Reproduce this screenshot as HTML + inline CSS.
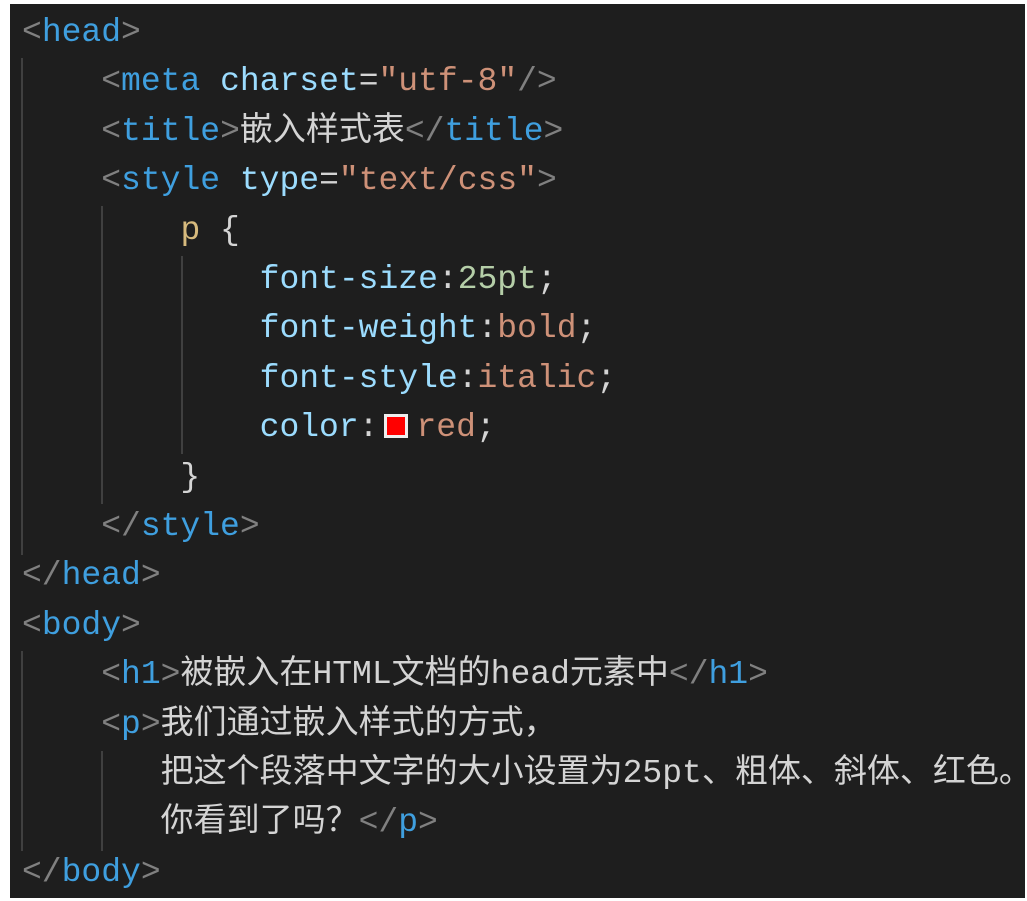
<!DOCTYPE html>
<html><head><meta charset="utf-8"><style>
html,body{margin:0;padding:0;background:#fff;width:1027px;height:901px;overflow:hidden}
#ed{position:absolute;left:10px;top:4px;width:1015px;height:894px;background:#1e1e1e}
.l{position:absolute;left:22px;height:49.4px;line-height:49.4px;font-family:"Liberation Mono","Noto Sans CJK SC",monospace;font-size:33px;white-space:pre;color:#d4d4d4}
.b{color:#808080}.t{color:#3f9fdf}.a{color:#9cdcfe}.s{color:#ce9178}.y{color:#d7ba7d}.n{color:#b5cea8}
.g{position:absolute;width:2px;background:#404040}
.sw{display:inline-block;width:18px;height:18px;background:#f00;border:3px solid #eee;vertical-align:-2px;margin:0 8px 0 6px}
#w{position:absolute;left:0;top:3px;width:1027px;height:898px}
</style></head><body>
<div id="ed"></div>
<div id="w">
<div class="g" style="left:21px;top:55px;height:497px"></div>
<div class="g" style="left:21px;top:648px;height:200px"></div>
<div class="g" style="left:101px;top:203px;height:298px"></div>
<div class="g" style="left:101px;top:748px;height:100px"></div>
<div class="g" style="left:181px;top:253px;height:198px"></div>
<div class="l" style="top:5px"><span class="b">&lt;</span><span class="t">head</span><span class="b">&gt;</span></div>
<div class="l" style="top:54.4px">    <span class="b">&lt;</span><span class="t">meta</span> <span class="a">charset</span>=<span class="s">"utf-8"</span><span class="b">/&gt;</span></div>
<div class="l" style="top:103.8px">    <span class="b">&lt;</span><span class="t">title</span><span class="b">&gt;</span>嵌入样式表<span class="b">&lt;/</span><span class="t">title</span><span class="b">&gt;</span></div>
<div class="l" style="top:153.2px">    <span class="b">&lt;</span><span class="t">style</span> <span class="a">type</span>=<span class="s">"text/css"</span><span class="b">&gt;</span></div>
<div class="l" style="top:202.6px">        <span class="y">p</span> {</div>
<div class="l" style="top:252px">            <span class="a">font-size</span>:<span class="n">25pt</span>;</div>
<div class="l" style="top:301.4px">            <span class="a">font-weight</span>:<span class="s">bold</span>;</div>
<div class="l" style="top:350.8px">            <span class="a">font-style</span>:<span class="s">italic</span>;</div>
<div class="l" style="top:400.2px">            <span class="a">color</span>:<span class="sw"></span><span class="s">red</span>;</div>
<div class="l" style="top:449.6px">        }</div>
<div class="l" style="top:499px">    <span class="b">&lt;/</span><span class="t">style</span><span class="b">&gt;</span></div>
<div class="l" style="top:548.4px"><span class="b">&lt;/</span><span class="t">head</span><span class="b">&gt;</span></div>
<div class="l" style="top:597.8px"><span class="b">&lt;</span><span class="t">body</span><span class="b">&gt;</span></div>
<div class="l" style="top:647.2px">    <span class="b">&lt;</span><span class="t">h1</span><span class="b">&gt;</span>被嵌入在HTML文档的head元素中<span class="b">&lt;/</span><span class="t">h1</span><span class="b">&gt;</span></div>
<div class="l" style="top:696.6px">    <span class="b">&lt;</span><span class="t">p</span><span class="b">&gt;</span>我们通过嵌入样式的方式，</div>
<div class="l" style="top:746px">       把这个段落中文字的大小设置为25pt、粗体、斜体、红色。</div>
<div class="l" style="top:795.4px">       你看到了吗？<span class="b">&lt;/</span><span class="t">p</span><span class="b">&gt;</span></div>
<div class="l" style="top:844.8px"><span class="b">&lt;/</span><span class="t">body</span><span class="b">&gt;</span></div>
</div>
</body></html>
